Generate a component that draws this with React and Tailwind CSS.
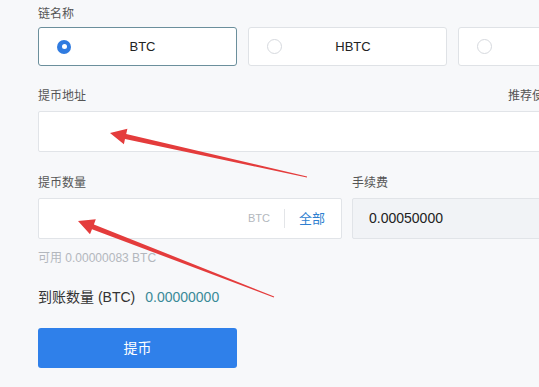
import React from 'react';

const arrowPoints = (tip, tail, head = 16, wing = 8, shaft = 2.6, tailW = 0.5) => {
  const dx = tip[0] - tail[0];
  const dy = tip[1] - tail[1];
  const len = Math.hypot(dx, dy);
  const ux = dx / len;
  const uy = dy / len;
  const nx = -uy;
  const ny = ux;
  const bx = tip[0] - ux * head;
  const by = tip[1] - uy * head;
  const pts = [
    tip,
    [bx + nx * wing, by + ny * wing],
    [bx + nx * shaft, by + ny * shaft],
    [tail[0] + nx * tailW, tail[1] + ny * tailW],
    [tail[0] - nx * tailW, tail[1] - ny * tailW],
    [bx - nx * shaft, by - ny * shaft],
    [bx - nx * wing, by - ny * wing],
  ];
  return pts.map((p) => `${p[0].toFixed(1)},${p[1].toFixed(1)}`).join(' ');
};

const Radio = ({ checked }) =>
  checked ? (
    <span className="w-[14px] h-[14px] rounded-full bg-[#2f7be0] flex items-center justify-center shrink-0">
      <span className="w-[5px] h-[5px] rounded-full bg-white" />
    </span>
  ) : (
    <span className="w-[15px] h-[15px] rounded-full border border-[#d6d9de] bg-white shrink-0" />
  );

const ChainCard = ({ name, checked }) => (
  <div
    className={`w-[199px] h-[39px] rounded-[3px] bg-white flex items-center pl-[18px] shrink-0 border ${
      checked ? 'border-[#6b8f9c]' : 'border-[#dfe2e6]'
    }`}
  >
    <Radio checked={checked} />
    <span className="flex-1 text-center pr-[22px] text-[13px] text-[#222]">{name}</span>
  </div>
);

export default function App() {
  return (
    <div
      className="relative w-[539px] h-[387px] overflow-hidden bg-[#f7f8fa]"
      style={{ fontFamily: '"Liberation Sans", "Noto Sans CJK SC", sans-serif' }}
    >
      <div className="w-[619px] ml-[38px] pt-[5px]">
        <p className="text-[12px] text-[#555] leading-[18px]">链名称</p>
        <div className="flex gap-[11px] mt-[4px]">
          <ChainCard name="BTC" checked />
          <ChainCard name="HBTC" />
          <ChainCard name="" />
        </div>

        <div className="flex items-center mt-[21px] text-[12px] text-[#555] leading-[18px]">
          <span>提币地址</span>
          <span className="ml-[422px] whitespace-nowrap">推荐使用钱包地址</span>
        </div>
        <div className="mt-[6px] h-[41px] bg-white border border-[#e1e4e8] rounded-[2px]" />

        <div className="flex gap-[10px] mt-[22px]">
          <div className="w-[304px]">
            <p className="text-[12px] text-[#555] leading-[18px]">提币数量</p>
            <div className="mt-[6px] h-[41px] bg-white border border-[#e1e4e8] rounded-[2px] flex items-center justify-end">
              <span className="text-[11px] text-[#b3b7bd]">BTC</span>
              <span className="w-px h-[19px] bg-[#e3e5e8] mx-[14px]" />
              <span className="text-[13px] text-[#2f7fd0] mr-[16px]">全部</span>
            </div>
          </div>
          <div className="flex-1">
            <p className="text-[12px] text-[#555] leading-[18px]">手续费</p>
            <div className="mt-[6px] h-[41px] bg-[#f1f3f6] border border-[#e1e4e8] rounded-[2px] flex items-center pl-[16px]">
              <span className="text-[14px] text-[#222]">0.00050000</span>
            </div>
          </div>
        </div>

        <p className="mt-[11px] text-[12px] text-[#b3b7bd] leading-[16px]">可用 0.00000083 BTC</p>

        <div className="mt-[22px] flex items-center text-[14px] leading-[18px]">
          <span className="text-[#333]">到账数量 (BTC)</span>
          <span className="ml-[10px] text-[#3a8a98]">0.00000000</span>
        </div>

        <button
          type="button"
          className="mt-[22px] w-[199px] h-[40px] rounded-[3px] bg-[#2f80ea] text-white text-[14px]"
        >
          提币
        </button>
      </div>

      <svg className="absolute inset-0 pointer-events-none" width="539" height="387">
        <polygon points={arrowPoints([110, 133], [307, 177])} fill="#e43c3c" />
        <polygon points={arrowPoints([78, 221], [274, 297])} fill="#e43c3c" />
      </svg>
    </div>
  );
}
